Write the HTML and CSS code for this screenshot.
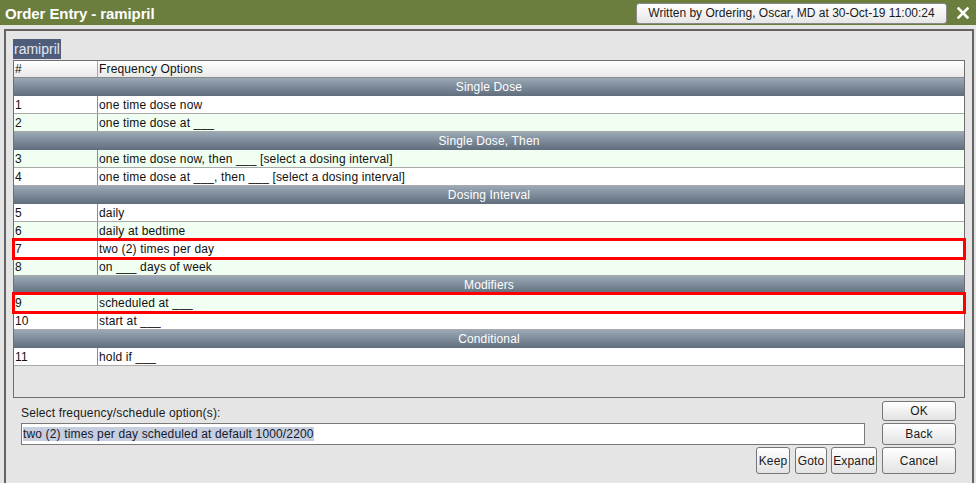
FILE: index.html
```html
<!DOCTYPE html>
<html>
<head>
<meta charset="utf-8">
<link rel="stylesheet" href="styles.css">
</head>
<body>
<div class="titlebar">
  <span class="title">Order Entry - ramipril</span>
  <span class="written">Written by Ordering, Oscar, MD at 30-Oct-19 11:00:24</span>
  <svg class="close" width="12" height="12" viewBox="0 0 12 12"><path d="M1.5 1.5 L10.5 10.5 M10.5 1.5 L1.5 10.5" stroke="#fff" stroke-width="2.6" stroke-linecap="square"/></svg>
</div>
<div class="panel">
  <div class="drug"><span class="drug-label">ramipril</span></div>
  <div class="table">
    <div class="row head"><div class="c1">#</div><div class="c2">Frequency Options</div></div>
    <div class="group">Single Dose</div>
    <div class="row"><div class="c1">1</div><div class="c2">one time dose now</div></div>
    <div class="row mint"><div class="c1">2</div><div class="c2">one time dose at ___</div></div>
    <div class="group">Single Dose, Then</div>
    <div class="row mint"><div class="c1">3</div><div class="c2">one time dose now, then ___ [select a dosing interval]</div></div>
    <div class="row"><div class="c1">4</div><div class="c2">one time dose at ___, then ___ [select a dosing interval]</div></div>
    <div class="group">Dosing Interval</div>
    <div class="row"><div class="c1">5</div><div class="c2">daily</div></div>
    <div class="row mint"><div class="c1">6</div><div class="c2">daily at bedtime</div></div>
    <div class="row flag"><div class="c1">7</div><div class="c2">two (2) times per day</div></div>
    <div class="row mint"><div class="c1">8</div><div class="c2">on ___ days of week</div></div>
    <div class="group">Modifiers</div>
    <div class="row mint flag"><div class="c1">9</div><div class="c2">scheduled at ___</div></div>
    <div class="row"><div class="c1">10</div><div class="c2">start at ___</div></div>
    <div class="group">Conditional</div>
    <div class="row"><div class="c1">11</div><div class="c2">hold if ___</div></div>
  </div>
  <div class="bottom">
    <div class="prompt">Select frequency/schedule option(s):</div>
    <button class="btn side">OK</button>
    <div class="input"><span class="sel">two (2) times per day scheduled at default 1000/2200</span></div>
    <button class="btn side">Back</button>
    <div class="small-btns">
      <button class="btn tall keep">Keep</button>
      <button class="btn tall goto">Goto</button>
      <button class="btn tall expand">Expand</button>
    </div>
    <button class="btn side tall">Cancel</button>
  </div>
</div>
</body>
</html>
```
FILE: styles.css
```css
* { box-sizing: border-box; }
html, body { margin: 0; padding: 0; }
body {
  width: 976px;
  height: 483px;
  overflow: hidden;
  background: #e5e5e5;
  font-family: "Liberation Sans", Arial, sans-serif;
  font-size: 12px;
  letter-spacing: 0.15px;
  color: #111;
}
.titlebar {
  height: 25px;
  background: #6b7e3d;
  display: flex;
  align-items: center;
  padding-left: 5px;
}
.title {
  color: #fff;
  font-weight: bold;
  font-size: 15px;
  letter-spacing: -0.1px;
  padding-top: 2px;
}
.written {
  margin-left: auto;
  width: 311px;
  height: 21px;
  margin-top: 1px;
  border: 1px solid #8a8a8a;
  border-radius: 3px;
  background: linear-gradient(#ffffff, #e6e6e6);
  color: #1a1a1a;
  font-size: 12px;
  letter-spacing: 0;
  line-height: 19px;
  text-align: center;
}
.close {
  margin-left: 10px;
  margin-right: 7px;
  display: block;
}
.panel {
  margin: 4px 2px 0 4px;
  height: 470px;
  border: 2px solid #646464;
  border-bottom: none;
  padding: 8px 7px 0 7px;
}
.drug { height: 21px; }
.drug-label {
  display: inline-block;
  height: 20px;
  padding: 0 1px;
  background: #4f5c7a;
  color: #e4e9f2;
  font-size: 14px;
  letter-spacing: 0;
  line-height: 20px;
}
.table {
  height: 338px;
  border: 1px solid #6e6e6e;
  background: #e5e5e5;
}
.row {
  display: grid;
  grid-template-columns: 84px 1fr;
  height: 18px;
  background: #ffffff;
  border-bottom: 1px solid #a9a9a9;
  line-height: 16px;
  padding-top: 1px;
}
.row.mint { background: #f0fff2; }
.row .c1 {
  border-right: 1px solid #8c8c8c;
  padding-left: 1px;
  margin-top: -1px;
  padding-top: 1px;
}
.row .c2 { padding-left: 1px; }
.row.head {
  height: 17px;
  line-height: 15px;
  background: linear-gradient(#ffffff, #e9e9e9);
  border-bottom: 1px solid #8a8a8a;
}
.row.head .c1 { border-right: 1px solid #a6a6a6; }
.row.flag {
  outline: 3px solid #ff0000;
  outline-offset: -1px;
  position: relative;
  z-index: 1;
}
.group {
  height: 18px;
  background: linear-gradient(#9ba8b6, #5f6d7c);
  color: #ffffff;
  text-align: center;
  line-height: 17px;
  padding-top: 1px;
}
.bottom {
  display: grid;
  grid-template-columns: 1fr 74px;
  grid-template-rows: 19px 21px 27px;
  column-gap: 5px;
  row-gap: 3px;
  margin-top: 3px;
  padding: 0 9px 0 8px;
}
.prompt {
  align-self: end;
  line-height: 14px;
  color: #1a1a1a;
}
.input {
  margin-right: 12px;
  height: 22px;
  background: #fff;
  border: 1px solid #7a7a7a;
  padding: 2px 1px 0 1px;
  line-height: 16px;
}
.sel {
  background: #c7cee0;
  color: #141a2a;
  font-size: 12px;
}
.small-btns {
  display: flex;
  justify-content: flex-end;
}
.btn {
  font-family: "Liberation Sans", Arial, sans-serif;
  font-size: 12px;
  letter-spacing: 0.15px;
  color: #1a1a1a;
  background: linear-gradient(#ffffff, #e3e3e3);
  border: 1px solid #767676;
  border-radius: 3px;
  padding: 0;
  margin: 0;
  height: 20px;
}
.btn.side { width: 74px; }
.btn.side:nth-of-type(2) { height: 22px; }
.btn.tall { height: 27px; }
.keep { width: 34px; }
.goto { width: 32px; margin-left: 5px; }
.expand { width: 46px; margin-left: 4px; }
```
